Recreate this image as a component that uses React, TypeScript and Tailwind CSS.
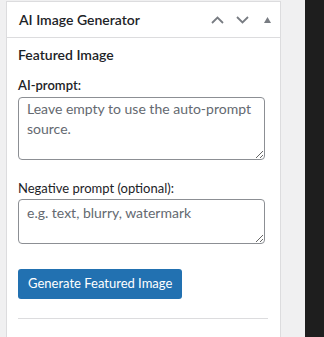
export default function App() {
  return (
    <div
      className="flex h-[337px] w-[324px] overflow-hidden bg-[#f0f0f1] text-[#1d2327]"
      style={{ fontFamily: 'Lato, "Noto Sans", sans-serif' }}
    >
      {/* Postbox */}
      <div className="ml-[6px] mt-px w-[275px] shrink-0 border-x border-t border-[#dcdcde] bg-white">
        {/* Header */}
        <div className="flex h-[36px] items-center border-b border-[#dcdcde] pl-[12px]">
          <h2 className="text-[14px] font-semibold leading-none">AI Image Generator</h2>
          <div className="ml-auto flex items-center">
            <button className="flex h-[36px] w-[25px] items-center justify-center text-[#787c82]">
              <svg width="13" height="8" viewBox="0 0 13 8" fill="none" stroke="currentColor" strokeWidth="1.8">
                <path d="M1 7 L6.5 1.5 L12 7" />
              </svg>
            </button>
            <button className="flex h-[36px] w-[25px] items-center justify-center text-[#787c82]">
              <svg width="13" height="8" viewBox="0 0 13 8" fill="none" stroke="currentColor" strokeWidth="1.8">
                <path d="M1 1 L6.5 6.5 L12 1" />
              </svg>
            </button>
            <button className="flex h-[36px] w-[25px] items-center justify-center text-[#787c82]">
              <svg width="7" height="6" viewBox="0 0 7 6" fill="currentColor">
                <path d="M3.5 0 L7 6 L0 6 Z" />
              </svg>
            </button>
          </div>
        </div>

        {/* Body */}
        <div className="px-[11px] pt-[7px]">
          <div className="text-[14px] font-semibold leading-[20px]">Featured Image</div>

          <label className="mt-[10px] block text-[13px] font-semibold leading-[20px]">AI-prompt:</label>
          <textarea
            readOnly
            placeholder="Leave empty to use the auto-prompt source."
            className="mt-[2px] block h-[63px] w-[247px] rounded-[4px] border border-[#8c8f94] px-[8px] py-[1px] text-[14px] leading-[20px] outline-none placeholder:text-[#646970]"
          />

          <label className="mt-[18px] block text-[13px] leading-[20px]">Negative prompt (optional):</label>
          <textarea
            readOnly
            placeholder="e.g. text, blurry, watermark"
            className="mt-px block h-[45px] w-[247px] rounded-[4px] border border-[#8c8f94] px-[8px] py-[3px] text-[14px] leading-[20px] outline-none placeholder:text-[#646970]"
          />

          <button className="mt-[25px] flex h-[30px] items-center rounded-[3px] bg-[#2271b1] px-[10px] text-[13px] text-white">
            Generate Featured Image
          </button>

          <div className="mt-[19px] h-px w-[250px] bg-[#dcdcde]" />
        </div>
      </div>

      <div className="flex-1" />
      <div className="w-[19px] shrink-0 bg-[#1e1e1e]" />
    </div>
  );
}
